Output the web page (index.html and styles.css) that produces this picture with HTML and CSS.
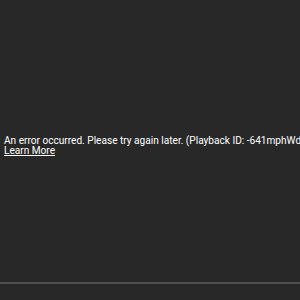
FILE: index.html
```html
<!DOCTYPE html>
<html lang="en">
<head>
    <meta charset="UTF-8">
    <title>Player error</title>
    <link rel="stylesheet" href="styles.css">
</head>
<body>
    <div class="player">
        <div class="error-screen">
            <div class="error-content">
                <div class="error-reason">An error occurred. Please try again later. (Playback ID: -641mphWdZkZ5Y3f)</div>
                <a class="learn-more" href="#">Learn More</a>
            </div>
        </div>
        <div class="progress-bar"></div>
    </div>
</body>
</html>
```

FILE: styles.css
```css
body {
    margin: 0;
    padding: 0;
    background-color: #282828;
    font-family: Roboto, Arial, sans-serif;
}
.player {
    width: 300px;
    height: 300px;
    overflow: hidden;
    display: flex;
    flex-direction: column;
}
.error-screen {
    flex: 1;
    display: flex;
    align-items: center;
}
.error-content {
    padding-left: 4px;
    margin-top: 10px;
    color: #fff;
    font-size: 10.1px;
    line-height: 10px;
    white-space: nowrap;
}
.learn-more {
    color: #fff;
    text-decoration: underline;
}
.progress-bar {
    height: 2px;
    background-color: #505050;
    margin-bottom: 16px;
}
```
